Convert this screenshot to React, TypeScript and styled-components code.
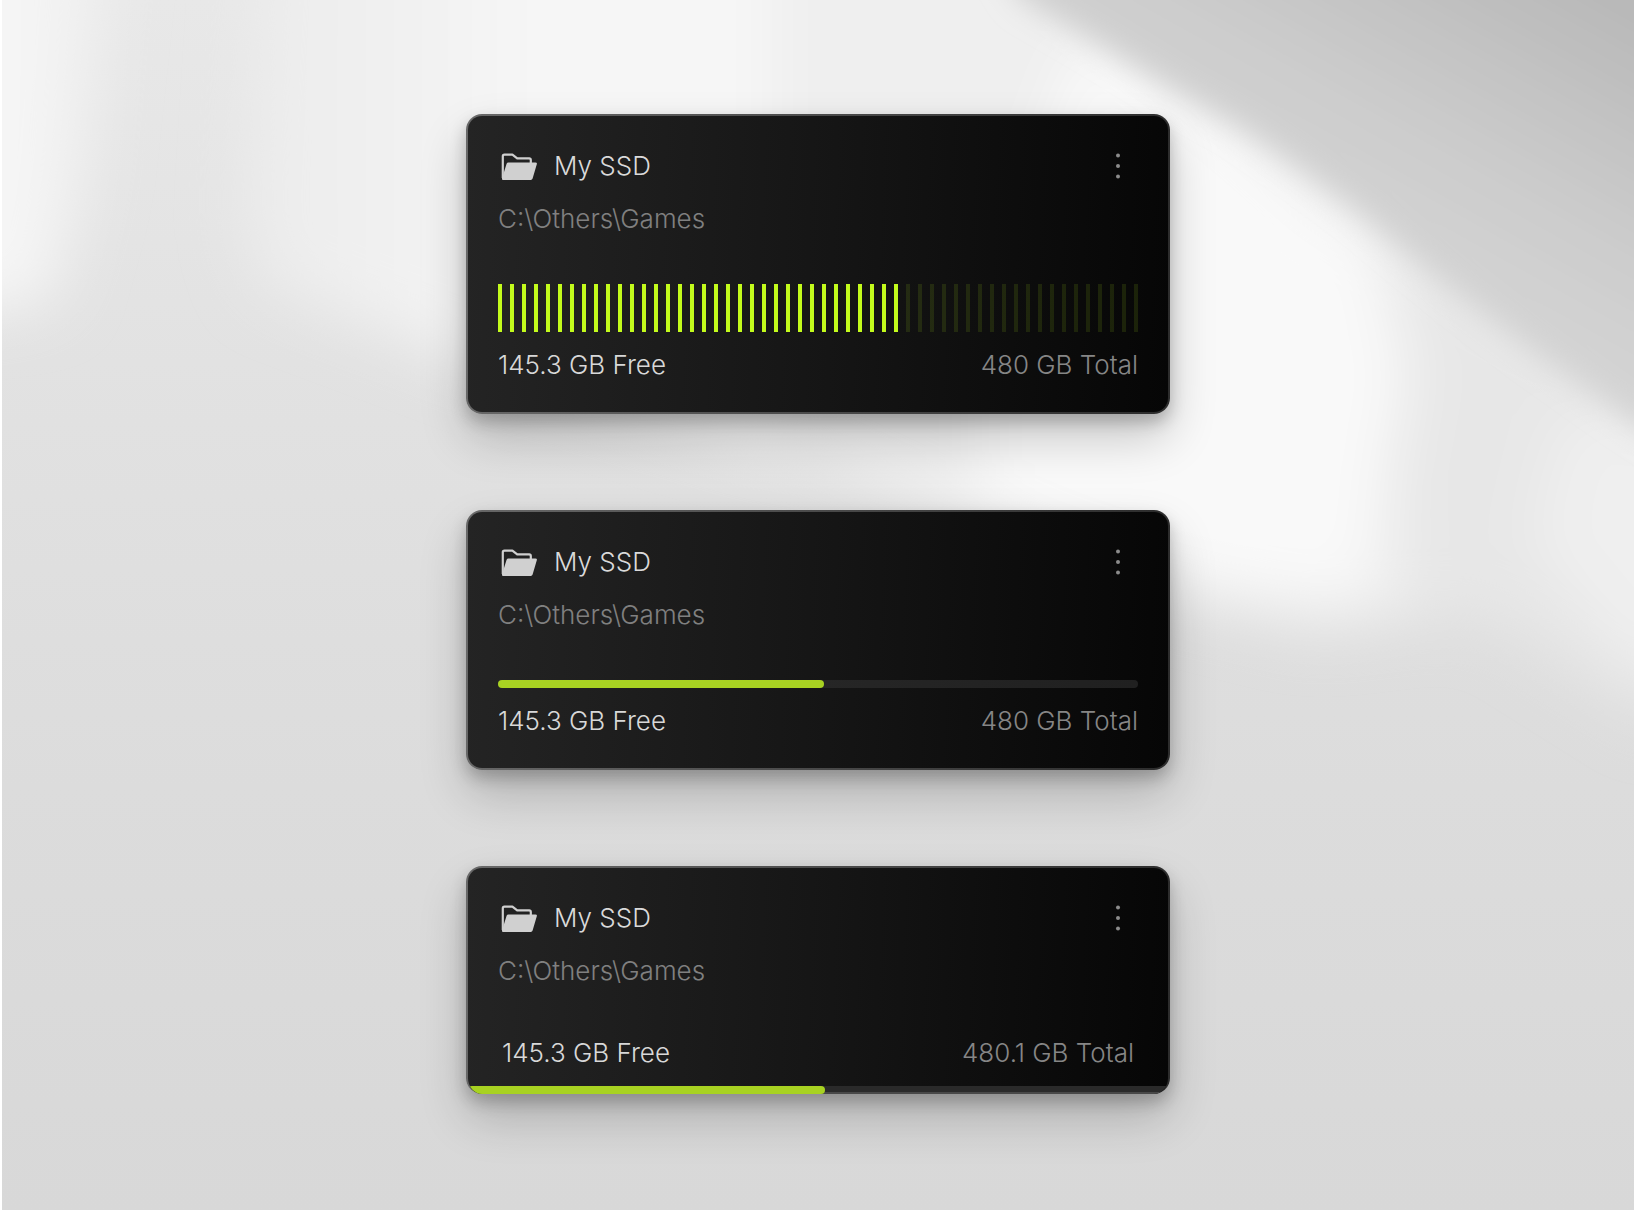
import React from "react";
import styled, { createGlobalStyle } from "styled-components";

const GlobalStyle = createGlobalStyle`
  *, *::before, *::after { box-sizing: border-box; }
  body { margin: 0; background: #ffffff; }
`;

const Page = styled.main`
  display: grid;
  min-height: 100vh;
  padding-left: 2px;
  font-family: "Inter", "Liberation Sans", sans-serif;
  font-size: 26px;
  line-height: 34px;
  font-weight: 300;
  overflow: hidden;
`;

const Backdrop = styled.svg`
  grid-area: 1 / 1;
  width: 100%;
  height: 100%;
  contain: size;
`;

const Stack = styled.div`
  grid-area: 1 / 1;
  place-self: center;
  width: 100%;
  max-width: 704px;
  padding-bottom: 2px;
  display: flex;
  flex-direction: column;
  gap: 96px;
  z-index: 1;
`;

const Card = styled.article`
  display: flex;
  flex-direction: column;
  gap: 16px;
  padding: 30px;
  border: 2px solid transparent;
  border-radius: 16px;
  background:
    linear-gradient(92deg, #242424 0%, #151515 52%, #060606 100%) padding-box,
    linear-gradient(92deg, #686868 0%, #4a4a4a 50%, #2c2c2c 100%) border-box;
  box-shadow: 0 24px 48px rgba(0, 0, 0, 0.2), 0 8px 16px rgba(0, 0, 0, 0.22);
`;

const Header = styled.header`
  display: flex;
  align-items: center;
  gap: 16px;
  height: 40px;
`;

const Title = styled.h2`
  flex: 1;
  margin: 0;
  font: inherit;
  color: #dadada;
`;

const MenuButton = styled.button`
  display: flex;
  padding: 0;
  border: 0;
  background: none;
  color: #8c8c8c;
  cursor: pointer;
`;

const Path = styled.p`
  margin: 0 0 32px;
  color: #808080;
`;

const Footer = styled.div<{ $inset?: boolean }>`
  display: flex;
  justify-content: space-between;
  padding: 0 ${(p) => (p.$inset ? 4 : 0)}px;
`;

const Free = styled.span`
  color: #d8d8d8;
`;

const Total = styled.span`
  color: #868686;
`;

const Bars = styled.div`
  display: flex;
  justify-content: space-between;
  height: 48px;
`;

const Bar = styled.span<{ $lit: boolean }>`
  width: 4px;
  background: ${(p) => (p.$lit ? "#c3fb1c" : "rgba(195, 251, 28, 0.11)")};
`;

const Track = styled.div`
  height: 8px;
  border-radius: 4px;
  background: linear-gradient(90deg, #2c2c2c, #202020);
`;

const Fill = styled.div`
  height: 8px;
  border-radius: 4px;
  background: #a8d222;
`;

const EdgeCard = styled(Card)`
  padding-bottom: 0;
  overflow: hidden;
  border-bottom-width: 0;
`;

const EdgeTrack = styled(Track)`
  margin: 0 -30px;
  border-radius: 0;
  background: linear-gradient(#2a2a2a 0 6px, #484848 6px 8px);
`;

const FolderIcon = () => (
  <svg width="40" height="40" viewBox="0 0 40 40" aria-hidden="true">
    <path
      d="M4.8 32V10.2Q4.8 8.6 6.4 8.6H14.4L19.2 12.4H31.2Q32.8 12.4 32.8 14V18"
      fill="none"
      stroke="#d0d0d0"
      strokeWidth="2.2"
      strokeLinejoin="round"
    />
    <path
      d="M10.4 16.4H37.4Q39.4 16.4 38.8 18.2L34.6 32.6Q34.2 34 32.8 34H5.2Q3.6 34 4 32.4L8.6 17.8Q9 16.4 10.4 16.4Z"
      fill="#d0d0d0"
    />
  </svg>
);

const DotsIcon = () => (
  <svg width="40" height="40" viewBox="0 0 40 40" fill="currentColor" aria-hidden="true">
    <circle cx="20" cy="9.4" r="2" />
    <circle cx="20" cy="20" r="2" />
    <circle cx="20" cy="30.6" r="2" />
  </svg>
);

const WallLight = () => (
  <Backdrop viewBox="0 0 1568 1161" preserveAspectRatio="none" aria-hidden="true">
    <defs>
      <linearGradient id="wall" x1="0" y1="0" x2="0" y2="1">
        <stop offset="0" stopColor="#e8e8e8" />
        <stop offset="0.35" stopColor="#e1e1e1" />
        <stop offset="0.65" stopColor="#dcdcdc" />
        <stop offset="1" stopColor="#d8d8d8" />
      </linearGradient>
      <linearGradient id="beam" x1="220" y1="0" x2="520" y2="0" gradientUnits="userSpaceOnUse">
        <stop offset="0" stopColor="#ebebeb" />
        <stop offset="1" stopColor="#f6f6f6" />
      </linearGradient>
      <linearGradient id="leftBeam" x1="0" y1="0" x2="110" y2="0" gradientUnits="userSpaceOnUse">
        <stop offset="0" stopColor="#f6f6f6" />
        <stop offset="1" stopColor="#eeeeee" />
      </linearGradient>
      <linearGradient id="corner" x1="1250" y1="300" x2="1450" y2="-60" gradientUnits="userSpaceOnUse">
        <stop offset="0" stopColor="#d9d9d9" />
        <stop offset="0.5" stopColor="#cccccc" />
        <stop offset="1" stopColor="#b8b8b8" />
      </linearGradient>
      <filter id="soft" x="-50%" y="-50%" width="200%" height="200%">
        <feGaussianBlur stdDeviation="28" />
      </filter>
      <filter id="edge" x="-50%" y="-50%" width="200%" height="200%">
        <feGaussianBlur stdDeviation="14" />
      </filter>
    </defs>
    <rect width="1568" height="1161" fill="url(#wall)" />
    <g filter="url(#soft)">
      <path d="M-100 -100H110L80 180L50 290L-100 310Z" fill="url(#leftBeam)" />
      <path d="M250 -100H760V440L480 360L250 275L230 220Z" fill="url(#beam)" />
      <path d="M740 -100H960L1400 300L1380 590L1260 605L1000 540L740 420Z" fill="#efefef" />
      <path d="M1300 200L1600 360V700L1440 600L1350 580Z" fill="#e7e7e7" />
      <path d="M1700 380L1500 400L1470 520L1568 640L1700 680Z" fill="#efefef" />
      <path d="M1040 30L1160 110L1320 220L1350 360L1310 570L1160 565L940 480V300Z" fill="#f9f9f9" />
    </g>
    <path
      d="M930 -80L980 0L1056 44L1128 88L1190 122L1248 162L1305 204L1353 244L1401 283L1468 335L1568 406L1700 490V-80Z"
      fill="url(#corner)"
      filter="url(#edge)"
    />
  </Backdrop>
);

const CardHeader = () => (
  <>
    <Header>
      <FolderIcon />
      <Title>My SSD</Title>
      <MenuButton type="button" aria-label="Drive options">
        <DotsIcon />
      </MenuButton>
    </Header>
    <Path>C:\Others\Games</Path>
  </>
);

type CapacityProps = { total: string; inset?: boolean };

const Capacity = ({ total, inset }: CapacityProps) => (
  <Footer $inset={inset}>
    <Free>145.3 GB Free</Free>
    <Total>{total} GB Total</Total>
  </Footer>
);

const BAR_COUNT = 54;
const LIT_COUNT = 34;
const USED = "51%";

export default function App() {
  return (
    <Page>
      <GlobalStyle />
      <WallLight />
      <Stack>
        <Card>
          <CardHeader />
          <Bars>
            {Array.from({ length: BAR_COUNT }, (_, i) => (
              <Bar key={i} $lit={i < LIT_COUNT} />
            ))}
          </Bars>
          <Capacity total="480" />
        </Card>
        <Card>
          <CardHeader />
          <Track>
            <Fill style={{ width: USED }} />
          </Track>
          <Capacity total="480" />
        </Card>
        <EdgeCard>
          <CardHeader />
          <Capacity total="480.1" inset />
          <EdgeTrack>
            <Fill style={{ width: USED }} />
          </EdgeTrack>
        </EdgeCard>
      </Stack>
    </Page>
  );
}
